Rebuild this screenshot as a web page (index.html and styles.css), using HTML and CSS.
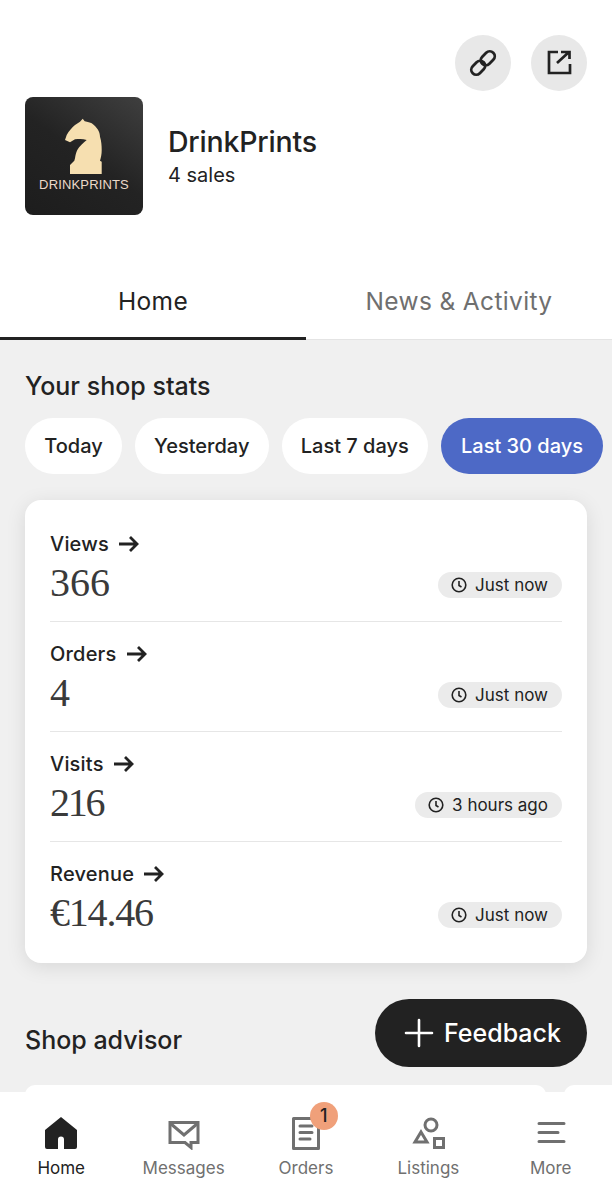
FILE: index.html
```html
<!DOCTYPE html>
<html lang="en">
<head>
<meta charset="utf-8">
<title>DrinkPrints</title>
<link rel="stylesheet" href="styles.css">
</head>
<body>
<div class="page">
  <header class="top">
    <div class="actions">
      <button class="round">
        <svg viewBox="0 0 32 32" width="32" height="32" fill="none" stroke="#222" stroke-width="2.8"><g transform="rotate(-45 16 16)"><rect x="1.500" y="11" width="15.500" height="10" rx="5"/><rect x="15" y="11" width="15.500" height="10" rx="5"/></g></svg>
      </button>
      <button class="round">
        <svg viewBox="0 0 32 32" width="32" height="32" fill="none" stroke="#222" stroke-width="2.7"><path d="M15 5H6v21h21v-9"/><path d="M14 16L26 5M18 5h8.500v7"/></svg>
      </button>
    </div>
    <div class="shop">
      <div class="logo">
        <svg class="knight" viewBox="0 0 40 60" width="40" height="60"><path fill="#f6dfb0" d="M18.700 1.700l2 2.500c3 .5 5.500 1.500 7 2.100C33 10 36 15 36 19.700c1.500 5 1.700 9 1.700 13.300 0 4-.7 7.700-1.700 10.700l1.700 1V57H6v-9l4.300-4.300.7-2.400c.5-3 1-5.800 2.300-8.300 2-4 6-7 9.400-10-4-1.500-8-1-11.700-.7L6 25.300 1 23l1.700-5C5 14 8 10.500 11 8l5-3.300z"/></svg>
        <span class="logo-text">DRINKPRINTS</span>
      </div>
      <div class="shop-info">
        <div class="shop-name">DrinkPrints</div>
        <div class="shop-sales">4 sales</div>
      </div>
    </div>
    <nav class="tabs">
      <div class="tab active">Home</div>
      <div class="tab">News &amp; Activity</div>
    </nav>
  </header>

  <main class="content">
    <h2 class="title">Your shop stats</h2>
    <div class="pills">
      <span class="pill">Today</span>
      <span class="pill">Yesterday</span>
      <span class="pill">Last 7 days</span>
      <span class="pill selected">Last 30 days</span>
    </div>

    <section class="card">
      <div class="row">
        <div>
          <div class="label">Views <svg class="arrow" viewBox="0 0 22 18" width="22" height="18"><path d="M1 9h18M12 2l7 7-7 7"/></svg></div>
          <div class="value">366</div>
        </div>
        <span class="stamp"><svg class="clock" viewBox="0 0 16 16" width="16" height="16"><circle cx="8" cy="8" r="6.800"/><path d="M8 4v4.500l2.500 1.500"/></svg>Just now</span>
      </div>
      <div class="row">
        <div>
          <div class="label">Orders <svg class="arrow" viewBox="0 0 22 18" width="22" height="18"><path d="M1 9h18M12 2l7 7-7 7"/></svg></div>
          <div class="value">4</div>
        </div>
        <span class="stamp"><svg class="clock" viewBox="0 0 16 16" width="16" height="16"><circle cx="8" cy="8" r="6.800"/><path d="M8 4v4.500l2.500 1.500"/></svg>Just now</span>
      </div>
      <div class="row">
        <div>
          <div class="label">Visits <svg class="arrow" viewBox="0 0 22 18" width="22" height="18"><path d="M1 9h18M12 2l7 7-7 7"/></svg></div>
          <div class="value tight">216</div>
        </div>
        <span class="stamp"><svg class="clock" viewBox="0 0 16 16" width="16" height="16"><circle cx="8" cy="8" r="6.800"/><path d="M8 4v4.500l2.500 1.500"/></svg>3 hours ago</span>
      </div>
      <div class="row">
        <div>
          <div class="label">Revenue <svg class="arrow" viewBox="0 0 22 18" width="22" height="18"><path d="M1 9h18M12 2l7 7-7 7"/></svg></div>
          <div class="value money">€14.46</div>
        </div>
        <span class="stamp"><svg class="clock" viewBox="0 0 16 16" width="16" height="16"><circle cx="8" cy="8" r="6.800"/><path d="M8 4v4.500l2.500 1.500"/></svg>Just now</span>
      </div>
    </section>

    <h2 class="title advisor">Shop advisor</h2>
    <div class="peek">
      <div class="peek-card"></div>
      <div class="peek-card"></div>
    </div>
  </main>

  <button class="feedback">
    <svg viewBox="0 0 30 30" width="30" height="30" fill="none" stroke="#fff" stroke-width="2.600" stroke-linecap="round"><path d="M15 2v26M2 15h26"/></svg>
    Feedback
  </button>

  <nav class="bottom">
    <div class="item current">
      <svg viewBox="0 0 34 34" width="34" height="34"><path fill="#222" d="M17 1L33 14V31a2 2 0 0 1-2 2H20V23.500a3 3 0 0 0-6 0V33H3a2 2 0 0 1-2-2V14z"/></svg>
      <span>Home</span>
    </div>
    <div class="item">
      <svg viewBox="0 0 34 34" width="34" height="34" fill="none" stroke="#707070" stroke-width="3"><path d="M3 6.500h28v20h-7v5l-6-5H3z"/><path d="M3.500 7.500L17 19 30.500 7.500"/></svg>
      <span>Messages</span>
    </div>
    <div class="item">
      <svg viewBox="0 0 34 34" width="34" height="34" fill="none" stroke="#707070" stroke-width="3"><path d="M4.500 2.500h25v30h-25z" stroke-linejoin="round"/><path d="M11 10h12M11 16.500h12M11 23h10" stroke-linecap="round"/></svg>
      <span>Orders</span>
      <b class="badge">1</b>
    </div>
    <div class="item">
      <svg viewBox="0 0 34 34" width="34" height="34" fill="none" stroke="#707070" stroke-width="3"><circle cx="20" cy="9" r="6"/><path d="M10 16l6 10H4z"/><path d="M23.500 22.500h9v9h-9z"/></svg>
      <span>Listings</span>
    </div>
    <div class="item">
      <svg viewBox="0 0 34 34" width="34" height="34" fill="none" stroke="#707070" stroke-width="3" stroke-linecap="round"><path d="M5 7.500h25M5 16.500h19M5 25.500h25"/></svg>
      <span>More</span>
    </div>
  </nav>
</div>
</body>
</html>
```

FILE: styles.css
```css
* { box-sizing: border-box; }
html, body { margin: 0; padding: 0; }
body { font-family: Inter, "Noto Sans", sans-serif; color: #222; background: #fff; }
.page { position: relative; width: 612px; height: 1200px; overflow: hidden; display: flex; flex-direction: column; }

.top { background: #fff; padding-top: 35px; }
.actions { display: flex; justify-content: flex-end; gap: 20px; padding-right: 25px; }
.round { width: 56px; height: 56px; border: 0; padding: 0; border-radius: 50%; background: #e8e8e8; display: flex; align-items: center; justify-content: center; }
.shop { display: flex; align-items: center; gap: 25px; padding: 6px 25px 0; }
.logo { width: 118px; height: 118px; border-radius: 8px; background: linear-gradient(215deg, #3f3f3f 0%, #232323 50%, #1d1d1d 100%); display: flex; flex-direction: column; align-items: center; padding-top: 20px; }
.knight { display: block; }
.logo-text { margin-top: 1px; font-family: "Liberation Sans", sans-serif; font-size: 13px; letter-spacing: .15px; color: #ecd9c9; line-height: 14px; }
.shop-info { margin-top: 5px; }
.shop-name { font-size: 28.500px; font-weight: 500; line-height: 34px; letter-spacing: -.2px; }
.shop-sales { font-size: 20px; line-height: 34px; margin-top: -1px; }

.tabs { display: flex; margin-top: 55px; border-bottom: 1px solid #e4e4e4; }
.tab { width: 306px; height: 69px; padding-top: 16px; line-height: 30px; font-size: 24.500px; text-align: center; color: #6f6f6f; letter-spacing: .35px; }
.tab.active { color: #222; height: 70px; margin-bottom: -1px; border-bottom: 3px solid #222; }

.content { flex: 1; min-height: 0; background: #f0f0f0; padding: 30px 0 0 25px; overflow: hidden; }
.title { margin: 0; font-size: 25px; font-weight: 500; line-height: 32px; }
.pills { display: flex; gap: 13px; margin-top: 16px; white-space: nowrap; }
.pill { height: 56px; padding: 0 19.200px; border-radius: 28px; background: #fff; font-size: 20px; font-weight: 500; line-height: 56px; }
.pill.selected { padding: 0 20px; background: #4d69c6; color: #fff; }

.card { width: 562px; margin-top: 26px; padding: 12px 25px 11px; background: #fff; border-radius: 16px; box-shadow: 0 4px 20px rgba(0,0,0,.1); }
.row { height: 110px; padding-top: 18px; display: flex; justify-content: space-between; align-items: flex-start; border-bottom: 1px solid #e6e6e6; }
.row:last-child { border-bottom: 0; }
.label { display: flex; align-items: center; gap: 9px; font-size: 20px; letter-spacing: .2px; font-weight: 500; line-height: 28px; }
.arrow { fill: none; stroke: #222; stroke-width: 2.800; }
.value { font-family: "Liberation Serif", serif; font-size: 40px; line-height: 46px; margin-top: 2px; color: #3a3a3a; }
.value.tight { letter-spacing: -2.300px; }
.value.money { letter-spacing: -1.200px; }
.stamp { display: flex; align-items: center; gap: 8px; height: 26px; margin-top: 42px; padding: 0 14px 0 13px; border-radius: 13px; background: #ebebeb; font-size: 17px; white-space: nowrap; }
.clock { fill: none; stroke: #222; stroke-width: 1.600; }

.advisor { margin-top: 61px; }
.peek { display: flex; gap: 18px; margin-top: 29px; }
.peek-card { flex: none; width: 521px; height: 40px; background: #fff; border-radius: 10px; }

.feedback { position: absolute; right: 25px; top: 999px; width: 212px; height: 68px; border: 0; border-radius: 34px; background: #222; color: #fff; display: flex; align-items: center; gap: 10px; padding: 0 0 0 29px; font-family: inherit; font-size: 25px; font-weight: 500; }

.bottom { flex: none; height: 108px; background: #fff; display: flex; padding-top: 24px; position: relative; }
.item { position: relative; width: 122.400px; display: flex; flex-direction: column; align-items: center; font-size: 17px; line-height: 22px; color: #707070; gap: 7px; }
.item svg { display: block; }
.item.current { color: #222; }
.badge { position: absolute; left: 65px; top: -14px; width: 28px; height: 28px; border-radius: 50%; background: #f0a07a; color: #222; font-size: 18px; font-weight: 500; line-height: 28px; text-align: center; }
```
